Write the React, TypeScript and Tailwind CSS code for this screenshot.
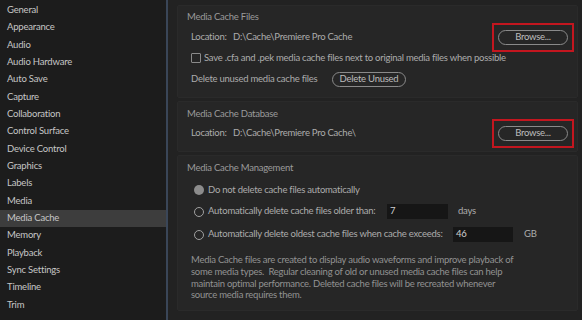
import React from 'react';

const items = [
  'General', 'Appearance', 'Audio', 'Audio Hardware', 'Auto Save', 'Capture', 'Collaboration',
  'Control Surface', 'Device Control', 'Graphics', 'Labels', 'Media', 'Media Cache', 'Memory',
  'Playback', 'Sync Settings', 'Timeline', 'Trim',
];

function Pill({ label, w }: { label: string; w: string }) {
  return (
    <div className={`${w} h-[15px] rounded-full border border-[#8a8a8a] flex items-center justify-center text-[#bdbdbd]`}>
      {label}
    </div>
  );
}

function Browse() {
  return (
    <div className="border-2 border-[#c3161f] px-[4px] py-[5px] mr-[3px]">
      <Pill label="Browse..." w="w-[70px]" />
    </div>
  );
}

function Radio({ on }: { on?: boolean }) {
  return on ? (
    <span className="w-[10px] h-[10px] rounded-full bg-[#8c8c8c] shrink-0" />
  ) : (
    <span className="w-[10px] h-[10px] rounded-full border-[1.5px] border-[#a0a0a0] shrink-0" />
  );
}

function Section({ children, cls }: { children: React.ReactNode; cls: string }) {
  return (
    <div className={`bg-[#262626] border border-[#2a2a2a] rounded-[2px] ${cls}`}>{children}</div>
  );
}

export default function App() {
  return (
    <div
      className="w-[582px] h-[320px] flex bg-[#222222] overflow-hidden text-[#acacac] whitespace-nowrap"
      style={{ fontFamily: 'Lato, "Open Sans", sans-serif' }}
    >
      {/* sidebar */}
      <div className="w-[168px] h-full shrink-0 bg-[#1c1c1c] border-r-2 border-[#3a4658] pt-[1.4px]">
        {items.map((it) => (
          <div
            key={it}
            className={`h-[17.35px] flex items-center pl-[7px] text-[9.5px] tracking-[-0.2px] text-[#c6c6c6] ${
              it === 'Media Cache' ? 'bg-[#3d3d3d]' : ''
            }`}
          >
            {it}
          </div>
        ))}
      </div>

      {/* main */}
      <div className="flex-1 pl-[9px] pr-[4px] pt-[5px] flex flex-col gap-[4px] text-[9.5px] tracking-[-0.25px]">
        <Section cls="pt-[5px] pb-[9px]">
          <div className="h-[12px] leading-[12px] pl-[9px] text-[#9a9a9a]">Media Cache Files</div>
          <div className="mt-[4px] h-[20px] flex items-center justify-between pl-[13px]">
            <div className="flex">
              <span className="w-[42px]">Location:</span>
              <span>D:\Cache\Premiere Pro Cache</span>
            </div>
            <Browse />
          </div>
          <div className="mt-[4px] h-[14px] flex items-center pl-[13px]">
            <span className="w-[10px] h-[10px] border border-[#8a8a8a] rounded-[1px] shrink-0" />
            <span className="ml-[3px]">Save .cfa and .pek media cache files next to original media files when possible</span>
          </div>
          <div className="mt-[5px] h-[18px] flex items-center pl-[13px]">
            <span className="w-[141px]">Delete unused media cache files</span>
            <Pill label="Delete Unused" w="w-[74px]" />
          </div>
        </Section>

        <Section cls="pt-[6px] pb-[8px] -mt-[1px]">
          <div className="h-[12px] leading-[12px] pl-[9px] text-[#9a9a9a]">Media Cache Database</div>
          <div className="mt-[3px] h-[20px] flex items-center justify-between pl-[13px]">
            <div className="flex">
              <span className="w-[42px]">Location:</span>
              <span>D:\Cache\Premiere Pro Cache\</span>
            </div>
            <Browse />
          </div>
        </Section>

        <Section cls="pt-[6px] pb-[9px] -mt-[1px]">
          <div className="h-[12px] leading-[12px] pl-[9px] text-[#9a9a9a]">Media Cache Management</div>
          <div className="mt-[9px] h-[14px] flex items-center pl-[16px]">
            <Radio on />
            <span className="ml-[4px]">Do not delete cache files automatically</span>
          </div>
          <div className="mt-[7px] h-[15px] flex items-center pl-[16px]">
            <Radio />
            <span className="ml-[4px] w-[179px]">Automatically delete cache files older than:</span>
            <span className="w-[61px] h-[15px] bg-[#161616] pl-[3px] flex items-center text-[#d0d0d0]">7</span>
            <span className="ml-[10px]">days</span>
          </div>
          <div className="mt-[8px] h-[15px] flex items-center pl-[16px]">
            <Radio />
            <span className="ml-[4px] w-[245px]">Automatically delete oldest cache files when cache exceeds:</span>
            <span className="w-[60px] h-[15px] bg-[#161616] pl-[3px] flex items-center text-[#d0d0d0]">46</span>
            <span className="ml-[11px]">GB</span>
          </div>
          <p className="mt-[12px] pl-[13px] leading-[11.8px] text-[#929292]">
            Media Cache files are created to display audio waveforms and improve playback of
            <br />
            some media types.&nbsp; Regular cleaning of old or unused media cache files can help
            <br />
            maintain optimal performance. Deleted cache files will be recreated whenever
            <br />
            source media requires them.
          </p>
        </Section>
      </div>
    </div>
  );
}
